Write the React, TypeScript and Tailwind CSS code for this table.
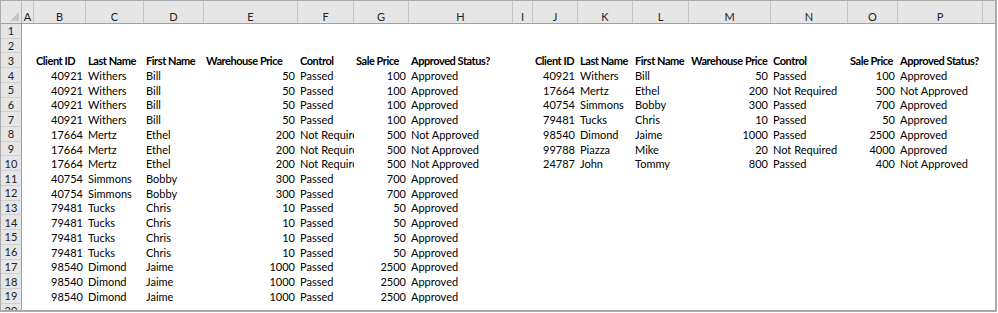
import React from "react";

const letters = ["A", "B", "C", "D", "E", "F", "G", "H", "I", "J", "K", "L", "M", "N", "O", "P"];

const widths = [
  "w-[12px]",
  "w-[52px]",
  "w-[58px]",
  "w-[60px]",
  "w-[94px]",
  "w-[56px]",
  "w-[55px]",
  "w-[104px]",
  "w-[20px]",
  "w-[45px]",
  "w-[55px]",
  "w-[56px]",
  "w-[82px]",
  "w-[77px]",
  "w-[50px]",
  "w-[85px]",
];

type Rec = [number, string, string, number, string, number, string];

const heads = ["Client ID", "Last Name", "First Name", "Warehouse Price", "Control", "Sale Price", "Approved Status?"];

const left: Rec[] = [
  [40921, "Withers", "Bill", 50, "Passed", 100, "Approved"],
  [40921, "Withers", "Bill", 50, "Passed", 100, "Approved"],
  [40921, "Withers", "Bill", 50, "Passed", 100, "Approved"],
  [40921, "Withers", "Bill", 50, "Passed", 100, "Approved"],
  [17664, "Mertz", "Ethel", 200, "Not Required", 500, "Not Approved"],
  [17664, "Mertz", "Ethel", 200, "Not Required", 500, "Not Approved"],
  [17664, "Mertz", "Ethel", 200, "Not Required", 500, "Not Approved"],
  [40754, "Simmons", "Bobby", 300, "Passed", 700, "Approved"],
  [40754, "Simmons", "Bobby", 300, "Passed", 700, "Approved"],
  [79481, "Tucks", "Chris", 10, "Passed", 50, "Approved"],
  [79481, "Tucks", "Chris", 10, "Passed", 50, "Approved"],
  [79481, "Tucks", "Chris", 10, "Passed", 50, "Approved"],
  [79481, "Tucks", "Chris", 10, "Passed", 50, "Approved"],
  [98540, "Dimond", "Jaime", 1000, "Passed", 2500, "Approved"],
  [98540, "Dimond", "Jaime", 1000, "Passed", 2500, "Approved"],
  [98540, "Dimond", "Jaime", 1000, "Passed", 2500, "Approved"],
];

const right: Rec[] = [
  [40921, "Withers", "Bill", 50, "Passed", 100, "Approved"],
  [17664, "Mertz", "Ethel", 200, "Not Required", 500, "Not Approved"],
  [40754, "Simmons", "Bobby", 300, "Passed", 700, "Approved"],
  [79481, "Tucks", "Chris", 10, "Passed", 50, "Approved"],
  [98540, "Dimond", "Jaime", 1000, "Passed", 2500, "Approved"],
  [99788, "Piazza", "Mike", 20, "Not Required", 4000, "Approved"],
  [24787, "John", "Tommy", 800, "Passed", 400, "Not Approved"],
];

type Cell = string | number | null;

function buildRow(r: number): { cells: Cell[]; bold: boolean } {
  const cells: Cell[] = new Array(16).fill(null);
  if (r === 3) {
    heads.forEach((h, i) => {
      cells[1 + i] = h;
      cells[9 + i] = h;
    });
    return { cells, bold: true };
  }
  const l = left[r - 4];
  if (l) l.forEach((v, i) => (cells[1 + i] = v));
  const rr = right[r - 4];
  if (rr) rr.forEach((v, i) => (cells[9 + i] = v));
  return { cells, bold: false };
}

function CornerCell() {
  return (
    <div className="relative w-[21px] shrink-0 border-r border-[#b9b9b9]">
      <svg className="absolute right-[2px] bottom-[2px]" width="9" height="9" viewBox="0 0 9 9">
        <polygon points="9,0 9,9 0,9" fill="#c6c6c6" />
      </svg>
    </div>
  );
}

export default function App() {
  const rows = Array.from({ length: 20 }, (_, i) => i + 1);

  return (
    <div className="w-[998px] h-[313px] overflow-hidden bg-white">
      <div className="h-[312px] w-[997px] overflow-hidden border border-[#ababab] border-r-2 border-b-2 font-['Lato',sans-serif] text-[11px] text-black">
        <div className="flex h-[23px] bg-[#e6e6e6] border-b border-[#a0a0a0] text-[#222]">
          <CornerCell />
          {letters.map((c, i) => (
            <div
              key={c}
              className={`${widths[i]} shrink-0 border-r border-[#c4c4c4] flex items-start justify-center pt-[10px] leading-none`}
            >
              {c}
            </div>
          ))}
          <div className="flex-1" />
        </div>

        {rows.map((r) => {
          const { cells, bold } = buildRow(r);
          return (
            <div key={r} className="flex h-[14.73px]">
              <div className="w-[21px] shrink-0 bg-[#e6e6e6] border-r border-[#a0a0a0] border-b border-b-[#cfcfcf] flex items-center justify-center text-[#222] leading-none">
                {r}
              </div>
              {cells.map((v, i) => {
                const num = typeof v === "number";
                return (
                  <div
                    key={i}
                    className={`${widths[i]} shrink-0 overflow-hidden whitespace-nowrap px-[2px] flex items-center leading-none ${
                      num ? "justify-end pr-[3px]" : "justify-start"
                    } ${bold ? "font-bold tracking-[-0.45px]" : ""}`}
                  >
                    {v}
                  </div>
                );
              })}
            </div>
          );
        })}
      </div>
    </div>
  );
}
